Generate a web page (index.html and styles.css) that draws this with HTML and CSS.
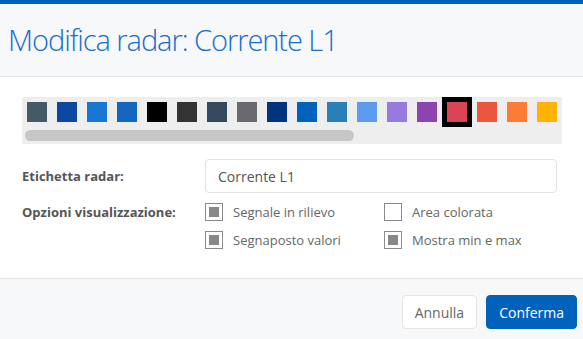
FILE: index.html
```html
<!DOCTYPE html>
<html lang="it">
<head>
    <meta charset="UTF-8">
    <title>Modifica radar</title>
    <link rel="stylesheet" href="styles.css">
</head>
<body>
    <div class="modal">
        <div class="modal-header">
            <h2 class="modal-title">Modifica radar: Corrente L1</h2>
        </div>

        <div class="modal-body">
            <div class="palette">
                <div class="palette-track">
                    <span class="swatch" style="background-color:#455a64"></span>
                    <span class="swatch" style="background-color:#0d47a1"></span>
                    <span class="swatch" style="background-color:#1976d2"></span>
                    <span class="swatch" style="background-color:#1565c0"></span>
                    <span class="swatch" style="background-color:#000000"></span>
                    <span class="swatch" style="background-color:#333333"></span>
                    <span class="swatch" style="background-color:#34495e"></span>
                    <span class="swatch" style="background-color:#6a6a6e"></span>
                    <span class="swatch" style="background-color:#01337f"></span>
                    <span class="swatch" style="background-color:#0062bd"></span>
                    <span class="swatch" style="background-color:#2980b9"></span>
                    <span class="swatch" style="background-color:#5d9cec"></span>
                    <span class="swatch" style="background-color:#967adc"></span>
                    <span class="swatch" style="background-color:#8e44ad"></span>
                    <span class="swatch selected" style="background-color:#da4453"></span>
                    <span class="swatch" style="background-color:#e9573f"></span>
                    <span class="swatch" style="background-color:#fc7b35"></span>
                    <span class="swatch" style="background-color:#ffb307"></span>
                    <span class="swatch" style="background-color:#f6bb42"></span>
                    <span class="swatch" style="background-color:#8cc152"></span>
                    <span class="swatch" style="background-color:#a0d468"></span>
                    <span class="swatch" style="background-color:#37bc9b"></span>
                    <span class="swatch" style="background-color:#48cfad"></span>
                    <span class="swatch" style="background-color:#3bafda"></span>
                    <span class="swatch" style="background-color:#4fc1e9"></span>
                    <span class="swatch" style="background-color:#d770ad"></span>
                    <span class="swatch" style="background-color:#ec87c0"></span>
                    <span class="swatch" style="background-color:#aab2bd"></span>
                    <span class="swatch" style="background-color:#656d78"></span>
                </div>
                <div class="palette-scroll">
                    <div class="palette-thumb"></div>
                </div>
            </div>

            <div class="form-row">
                <label class="form-label" for="radar-label">Etichetta radar:</label>
                <input id="radar-label" class="form-input" type="text" value="Corrente L1">
            </div>

            <div class="form-row form-row-options">
                <span class="form-label">Opzioni visualizzazione:</span>
                <div class="options">
                    <label class="option"><span class="check checked"></span>Segnale in rilievo</label>
                    <label class="option"><span class="check"></span>Area colorata</label>
                    <label class="option"><span class="check checked"></span>Segnaposto valori</label>
                    <label class="option"><span class="check checked"></span>Mostra min e max</label>
                </div>
            </div>
        </div>

        <div class="modal-footer">
            <button class="btn btn-default">Annulla</button>
            <button class="btn btn-primary">Conferma</button>
        </div>
    </div>
</body>
</html>
```

FILE: styles.css
```css
* {
    margin: 0;
    padding: 0;
    box-sizing: border-box;
}

body {
    background: #fff;
    font-family: 'Open Sans', 'Liberation Sans', sans-serif;
    color: #555;
    overflow: hidden;
}

.modal {
    border-top: 4px solid #0063be;
    background: #fff;
}

.modal-header {
    height: 73px;
    padding: 0 8px 2px;
    display: flex;
    align-items: center;
    background: #f7f8fa;
    border-bottom: 1px solid #e5e5e5;
}

.modal-title {
    font-size: 29px;
    font-weight: 300;
    letter-spacing: -1.05px;
    color: #1a6ccc;
}

.modal-body {
    padding: 20px 21px 24px 22px;
}

/* Colour picker strip */
.palette {
    background: #eeeeee;
    overflow: hidden;
    margin-bottom: 15px;
}

.palette-track {
    display: flex;
    width: max-content;
}

.swatch {
    display: block;
    width: 30px;
    height: 30px;
    border: 5px solid transparent;
    background-clip: content-box;
}

.swatch.selected {
    border-color: #000;
}

.palette-scroll {
    height: 17px;
    padding: 3px;
}

.palette-thumb {
    width: 329px;
    height: 11px;
    border-radius: 6px;
    background: #c6c6c6;
}

/* Form */
.form-row {
    display: flex;
    align-items: center;
    margin-right: 5px;
}

.form-row + .form-row {
    margin-top: 5px;
}

.form-label {
    width: 183px;
    flex-shrink: 0;
    font-size: 13px;
    font-weight: 700;
    color: #555;
}

.form-row-options {
    align-items: flex-start;
}

.form-row-options .form-label {
    line-height: 28px;
}

.form-input {
    flex: 1;
    height: 34px;
    padding: 0 12px;
    border: 1px solid #e2e2e2;
    border-radius: 4px;
    font-family: 'Open Sans', 'Liberation Sans', sans-serif;
    font-size: 14px;
    color: #555;
    outline: none;
}

.options {
    display: grid;
    grid-template-columns: 179px 1fr;
    grid-auto-rows: 28px;
}

.option {
    display: flex;
    align-items: center;
    gap: 10px;
    font-size: 13px;
    color: #666;
}

.check {
    width: 18px;
    height: 18px;
    border: 1px solid #8a8a8a;
    padding: 3px;
    background: #fff;
}

.check.checked::after {
    content: "";
    display: block;
    width: 100%;
    height: 100%;
    background: #888;
}

/* Footer */
.modal-footer {
    display: flex;
    justify-content: flex-end;
    gap: 9px;
    padding: 16px 6px 20px;
    background: #f7f8fa;
    border-top: 1px solid #e5e5e5;
}

.btn {
    height: 34px;
    padding: 0 12px;
    border-radius: 4px;
    font-family: 'Open Sans', 'Liberation Sans', sans-serif;
    font-size: 14px;
    cursor: pointer;
}

.btn-default {
    background: #fff;
    border: 1px solid #e3e3e3;
    color: #666;
}

.btn-primary {
    background: #0062bd;
    border: 1px solid #0062bd;
    color: #fff;
}
```
